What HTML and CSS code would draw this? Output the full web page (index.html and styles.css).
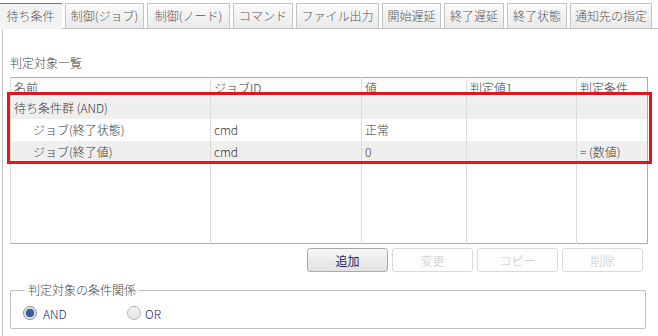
FILE: index.html
```html
<!DOCTYPE html>
<html><head>
  <meta charset="UTF-8">
  <title>待ち条件</title>
  <link rel="stylesheet" href="styles.css">
</head>
<body>
  <div class="tabs">
    <div class="tab active">待ち条件</div>
    <div class="tab">制御(ジョブ)</div>
    <div class="tab">制御(ノード)</div>
    <div class="tab">コマンド</div>
    <div class="tab">ファイル出力</div>
    <div class="tab">開始遅延</div>
    <div class="tab">終了遅延</div>
    <div class="tab">終了状態</div>
    <div class="tab">通知先の指定</div>
  </div>

  <div class="panel">
    <div class="section-label">判定対象一覧</div>

    <div class="table-wrap">
      <table class="cond-table">
        <colgroup>
          <col class="c-name"><col class="c-job"><col class="c-val"><col class="c-judge"><col class="c-cond">
        </colgroup>
        <thead>
          <tr>
            <th>名前</th>
            <th>ジョブID</th>
            <th>値</th>
            <th>判定値1</th>
            <th>判定条件</th>
          </tr>
        </thead>
        <tbody>
          <tr class="shade">
            <td>待ち条件群 (AND)</td><td></td><td></td><td></td><td></td>
          </tr>
          <tr>
            <td class="indent">ジョブ(終了状態)</td><td>cmd</td><td>正常</td><td></td><td></td>
          </tr>
          <tr class="shade">
            <td class="indent">ジョブ(終了値)</td><td>cmd</td><td>0</td><td></td><td>= (数値)</td>
          </tr>
          <tr class="filler">
            <td></td><td></td><td></td><td></td><td></td>
          </tr>
        </tbody>
      </table>
      <div class="highlight"></div>
    </div>

    <div class="actions">
      <button class="btn">追加</button>
      <button class="btn" disabled>変更</button>
      <button class="btn" disabled>コピー</button>
      <button class="btn" disabled>削除</button>
    </div>

    <fieldset class="relation">
      <legend>判定対象の条件関係</legend>
      <label class="radio checked"><span class="dot"></span>AND</label>
      <label class="radio"><span class="dot"></span>OR</label>
    </fieldset>
  </div>
</body>
</html>
```

FILE: styles.css
```css
:root {
  --border-color: #c4c4c4;
  --grid-color: #dcdcdc;
  --text-color: #3a3a3a;
  --navy-text: #1e1e5a;
  --mark-color: #e8141c;
}

body {
  margin: 0;
  width: 658px;
  height: 336px;
  overflow: hidden;
  background-color: white;
  font-family: "Noto Sans CJK JP", "Noto Sans", sans-serif;
  font-size: 12px;
  font-weight: 300;
  color: var(--text-color);
}

/* tab strip */
.tabs {
  display: grid;
  grid-template-columns: 62px 79px 83px 60px 83px 59px 60px 60px 82px;
  column-gap: 3px;
  padding-top: 3px;
  height: 25px;
  border-bottom: 1px solid var(--border-color);
}

.tab {
  box-sizing: border-box;
  height: 25px;
  line-height: 23px;
  text-align: center;
  color: #555;
  white-space: nowrap;
  border: 1px solid var(--border-color);
  border-bottom: none;
  background: linear-gradient(#fbfbfb, #e9e9e9);
}

.tab.active {
  height: 26px;
  margin-left: -1px;
  border: none;
  border-top: 1px solid #5b7cab;
  background: #f2f2f2;
}

/* content panel */
.panel {
  margin-left: 2px;
  height: 307px;
  border-left: 1px solid var(--border-color);
  padding: 0 11px 0 7px;
}

.section-label {
  padding-top: 26px;
  line-height: 16px;
  color: #444;
}

.table-wrap {
  position: relative;
  margin-top: 6px;
}

.cond-table {
  width: 637px;
  border-collapse: collapse;
  table-layout: fixed;
  border: 1px solid #ababab;
}

.c-name { width: 200px; }
.c-job { width: 151px; }
.c-val { width: 105px; }
.c-judge { width: 110px; }
.c-cond { width: 71px; }

.cond-table th,
.cond-table td {
  border-left: 1px solid var(--grid-color);
  padding: 0 3px;
  text-align: left;
  font-weight: 300;
  white-space: nowrap;
  overflow: hidden;
}

.cond-table th {
  height: 18px;
  line-height: 18px;
  padding-top: 1px;
  background-color: #fbfbfb;
}

.cond-table td {
  height: 22px;
  line-height: 22px;
}

.cond-table tr.shade td {
  background-color: #efefef;
}

.cond-table td.indent {
  padding-left: 22px;
}

.cond-table tr.filler td {
  height: 80px;
}

/* red annotation box over the rows */
.highlight {
  position: absolute;
  box-sizing: border-box;
  left: -3px;
  top: 15px;
  width: 645px;
  height: 72px;
  border: 3px solid var(--mark-color);
}

/* buttons under the list */
.actions {
  display: flex;
  justify-content: flex-end;
  gap: 4px;
  margin-top: 4px;
  padding-right: 4px;
}

.btn {
  width: 81px;
  height: 24px;
  padding: 0;
  font-family: inherit;
  font-size: 12px;
  font-weight: 400;
  color: var(--navy-text);
  border: 1px solid #a9a9a9;
  border-radius: 3px;
  background: linear-gradient(#f6f6f6, #e2e2e2);
}

.btn:disabled {
  font-weight: 300;
  color: #c8c8c8;
  border-color: #dadada;
  background: #fdfdfd;
}

/* condition relation group */
.relation {
  margin: 11px 0 0;
  width: 636px;
  box-sizing: border-box;
  padding: 6px 12px 5px;
  border: 1px solid #bdbdbd;
  border-radius: 2px;
  display: flex;
  align-items: center;
}

.relation legend {
  margin-left: 2px;
  padding: 0 3px;
  line-height: 14px;
  color: #444;
}

.radio {
  display: flex;
  align-items: center;
  gap: 6px;
  height: 20px;
  color: var(--navy-text);
}

.radio:first-of-type {
  width: 104px;
}

.dot {
  box-sizing: border-box;
  width: 14px;
  height: 14px;
  border-radius: 50%;
  border: 1px solid #b4b4b4;
  background: linear-gradient(#f4f4f4, #e4e4e4);
}

.radio.checked .dot {
  border-color: #8a8a8a;
  background: radial-gradient(circle, #3a5f98 0, #3a5f98 4px, #dfe6ef 4.6px);
}

.radio:not(.checked) {
  gap: 4px;
}
```
